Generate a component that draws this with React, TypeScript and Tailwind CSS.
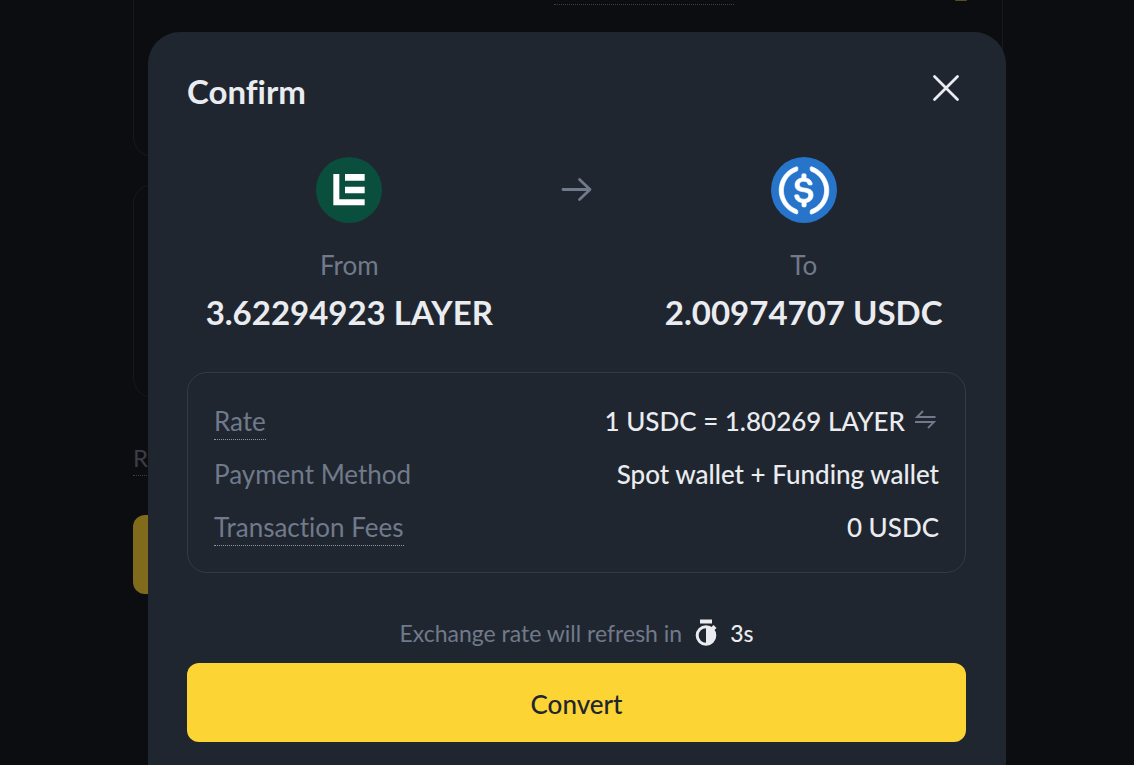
import type { ReactNode } from "react";

interface AssetProps {
  icon: ReactNode;
  label: string;
  amount: string;
}

interface DetailRowProps {
  label: string;
  hint?: boolean;
  children: ReactNode;
}

function LayerLogo() {
  return (
    <svg viewBox="0 0 198 198" className="size-[66px]" aria-hidden="true">
      <circle cx="99" cy="99" r="99" fill="#0a4f3e" />
      <path d="M52 51h18v76h76v18H52z" fill="#fff" />
      <path d="M87 51h59v20H87zM87 89h59v20H87z" fill="#fff" />
    </svg>
  );
}

function UsdcLogo() {
  return (
    <svg viewBox="0 0 2000 2000" className="size-[66px]" aria-hidden="true">
      <circle cx="1000" cy="1000" r="1000" fill="#2775ca" />
      <path
        fill="#fff"
        stroke="#fff"
        strokeWidth="20"
        d="M1275 1158.33c0-145.83-87.5-195.83-262.5-216.66-125-16.67-150-50-150-108.34s41.67-95.83 125-95.83c75 0 116.67 25 137.5 87.5 4.17 12.5 16.67 20.83 29.17 20.83h66.66c16.67 0 29.17-12.5 29.17-29.16v-4.17c-16.67-91.67-91.67-162.5-187.5-170.83v-100c0-16.67-12.5-29.17-33.33-33.34h-62.5c-16.67 0-29.17 12.5-33.34 33.34v95.83c-125 16.67-204.16 100-204.16 204.17 0 137.5 83.33 191.66 258.33 212.5 116.67 20.83 154.17 45.83 154.17 112.5s-58.34 112.5-137.5 112.5c-108.34 0-145.84-45.84-158.34-108.34-4.16-16.66-16.66-25-29.16-25h-70.84c-16.66 0-29.16 12.5-29.16 29.17v4.17c16.66 104.16 83.33 179.16 220.83 200v100c0 16.66 12.5 29.16 33.33 33.33h62.5c16.67 0 29.17-12.5 33.34-33.33v-100c125-20.84 208.33-108.34 208.33-220.84z"
      />
      <path
        fill="#fff"
        stroke="#fff"
        strokeWidth="20"
        d="M787.5 1595.83c-325-116.66-491.67-479.16-370.83-800 62.5-175 200-308.33 370.83-370.83 16.67-8.33 25-20.83 25-41.67V325c0-16.67-8.33-29.17-25-33.33-4.17 0-12.5 0-16.67 4.16-395.83 125-612.5 545.84-487.5 941.67 75 233.33 254.17 412.5 487.5 487.5 16.67 8.33 33.34 0 37.5-16.67 4.17-4.16 4.17-8.33 4.17-16.66v-58.34c0-12.5-12.5-29.16-25-37.5zM1229.17 295.83c-16.67-8.33-33.34 0-37.5 16.67-4.17 4.17-4.17 8.33-4.17 16.67v58.33c0 16.67 12.5 33.33 25 41.67 325 116.66 491.67 479.16 370.83 800-62.5 175-200 308.33-370.83 370.83-16.67 8.33-25 20.83-25 41.67V1700c0 16.67 8.33 29.17 25 33.33 4.17 0 12.5 0 16.67-4.16 395.83-125 612.5-545.84 487.5-941.67-75-237.5-258.34-416.67-487.5-491.67z"
      />
    </svg>
  );
}

function CloseIcon() {
  return (
    <svg viewBox="0 0 40 40" className="size-10" fill="none" stroke="currentColor" strokeWidth="2.8" strokeLinecap="round">
      <path d="M8.500 8.500l23 23M31.500 8.500l-23 23" />
    </svg>
  );
}

function ArrowIcon() {
  return (
    <svg
      viewBox="0 0 32 26"
      className="h-[26px] w-8 text-[#707a8a]"
      fill="none"
      stroke="currentColor"
      strokeWidth="2.8"
      strokeLinecap="round"
      strokeLinejoin="round"
      aria-hidden="true"
    >
      <path d="M3 12.500h27M19.500 2.500l10.500 10-10.500 10" />
    </svg>
  );
}

function SwapIcon() {
  return (
    <svg viewBox="0 0 24 24" className="size-6" fill="none" stroke="currentColor" strokeWidth="1.8">
      <path d="M20.500 8H2l6-6M0 13h19l-6 6" />
    </svg>
  );
}

function StopwatchIcon() {
  return (
    <svg viewBox="0 0 24 28" className="h-7 w-6 text-[#eaecef]" aria-hidden="true">
      <path d="M6 .5h12v4H6z" fill="currentColor" />
      <circle cx="12" cy="16.500" r="8.800" fill="none" stroke="currentColor" strokeWidth="3" />
      <path d="M12 8a8.500 8.500 0 010 17z" fill="currentColor" />
      <path d="M19.500 6l3 3-4 4-3-3z" fill="currentColor" />
    </svg>
  );
}

function Asset({ icon, label, amount }: AssetProps) {
  return (
    <div className="flex flex-col items-center">
      {icon}
      <p className="mt-[26px] text-[26px] leading-8 text-[#707a8a]">{label}</p>
      <p className="mt-[11px] whitespace-nowrap text-[33px] font-bold leading-10">{amount}</p>
    </div>
  );
}

function DetailRow({ label, hint, children }: DetailRowProps) {
  return (
    <div className="flex items-start justify-between">
      <dt
        className={
          hint
            ? "border-b border-dotted border-[#8d96a5] leading-9 text-[#707a8a]"
            : "border-b border-transparent leading-9 text-[#707a8a]"
        }
      >
        {label}
      </dt>
      <dd className="flex items-center gap-2.5 font-medium leading-9">{children}</dd>
    </div>
  );
}

// Convert form that sits dimmed behind the dialog
function ConvertForm() {
  return (
    <div className="pl-0.5" aria-hidden="true">
      <div className="mx-auto max-w-[870px]">
        <div className="h-[157px] rounded-b-[20px] border border-t-0 border-[#17191e]">
          <div className="flex justify-end pr-[35px]">
            <div className="mr-[221px] h-[5px] w-[180px] border-b border-dotted border-[#3a3f47]" />
            <div className="h-px w-3 rounded-b-full bg-[#5c4e18]" />
          </div>
        </div>
        <div className="mt-[27px] h-[214px] rounded-[20px] border border-[#17191e]" />
        <div className="mt-[42px] flex">
          <span className="border-b border-dotted border-[#3a3f47] text-2xl leading-[35px] text-[#3a3f47]">Rate</span>
        </div>
        <div className="mt-[39px] h-[79px] rounded-xl bg-[#7f6b1b]" />
      </div>
    </div>
  );
}

export default function App() {
  return (
    <div className="h-screen overflow-hidden bg-[#0c0d10] font-['Lato',sans-serif] text-[#eaecef] [font-variant-ligatures:none]">
      <ConvertForm />

      <div className="fixed inset-0 flex items-start justify-center overflow-hidden pl-5 pt-8">
        <div
          role="dialog"
          aria-modal="true"
          aria-labelledby="confirm-title"
          className="w-full max-w-[858px] rounded-[32px] bg-[#202630] pb-16 pl-[39px] pr-10 pt-9"
        >
          {/* Header */}
          <div className="flex items-start justify-between">
            <h2 id="confirm-title" className="text-[33px] font-bold leading-[46px]">
              Confirm
            </h2>
            <button type="button" aria-label="Close">
              <CloseIcon />
            </button>
          </div>

          {/* Assets */}
          <div className="mt-[43px] grid grid-cols-[5fr_2fr_5fr]">
            <Asset icon={<LayerLogo />} label="From" amount="3.62294923 LAYER" />
            <div className="flex h-[66px] items-center justify-center">
              <ArrowIcon />
            </div>
            <Asset icon={<UsdcLogo />} label="To" amount="2.00974707 USDC" />
          </div>

          {/* Details */}
          <dl className="mt-10 flex flex-col gap-4 rounded-[20px] border border-[#333b47] px-[26px] pb-[26px] pt-[30px] text-[26px]">
            <DetailRow label="Rate" hint>
              1 USDC = 1.80269 LAYER
              <button type="button" aria-label="Invert rate" className="text-[#707a8a]">
                <SwapIcon />
              </button>
            </DetailRow>
            <DetailRow label="Payment Method">Spot wallet + Funding wallet</DetailRow>
            <DetailRow label="Transaction Fees" hint>
              0 USDC
            </DetailRow>
          </dl>

          {/* Refresh timer */}
          <div className="mt-11 flex items-center justify-center gap-3 text-[23px] leading-8">
            <span className="text-[#707a8a]">Exchange rate will refresh in</span>
            <StopwatchIcon />
            <span className="font-medium">3s</span>
          </div>

          <button
            type="button"
            className="mt-3.5 h-[79px] w-full rounded-xl bg-[#fcd535] pt-1 text-[26px] font-medium text-[#202630]"
          >
            Convert
          </button>
        </div>
      </div>
    </div>
  );
}
